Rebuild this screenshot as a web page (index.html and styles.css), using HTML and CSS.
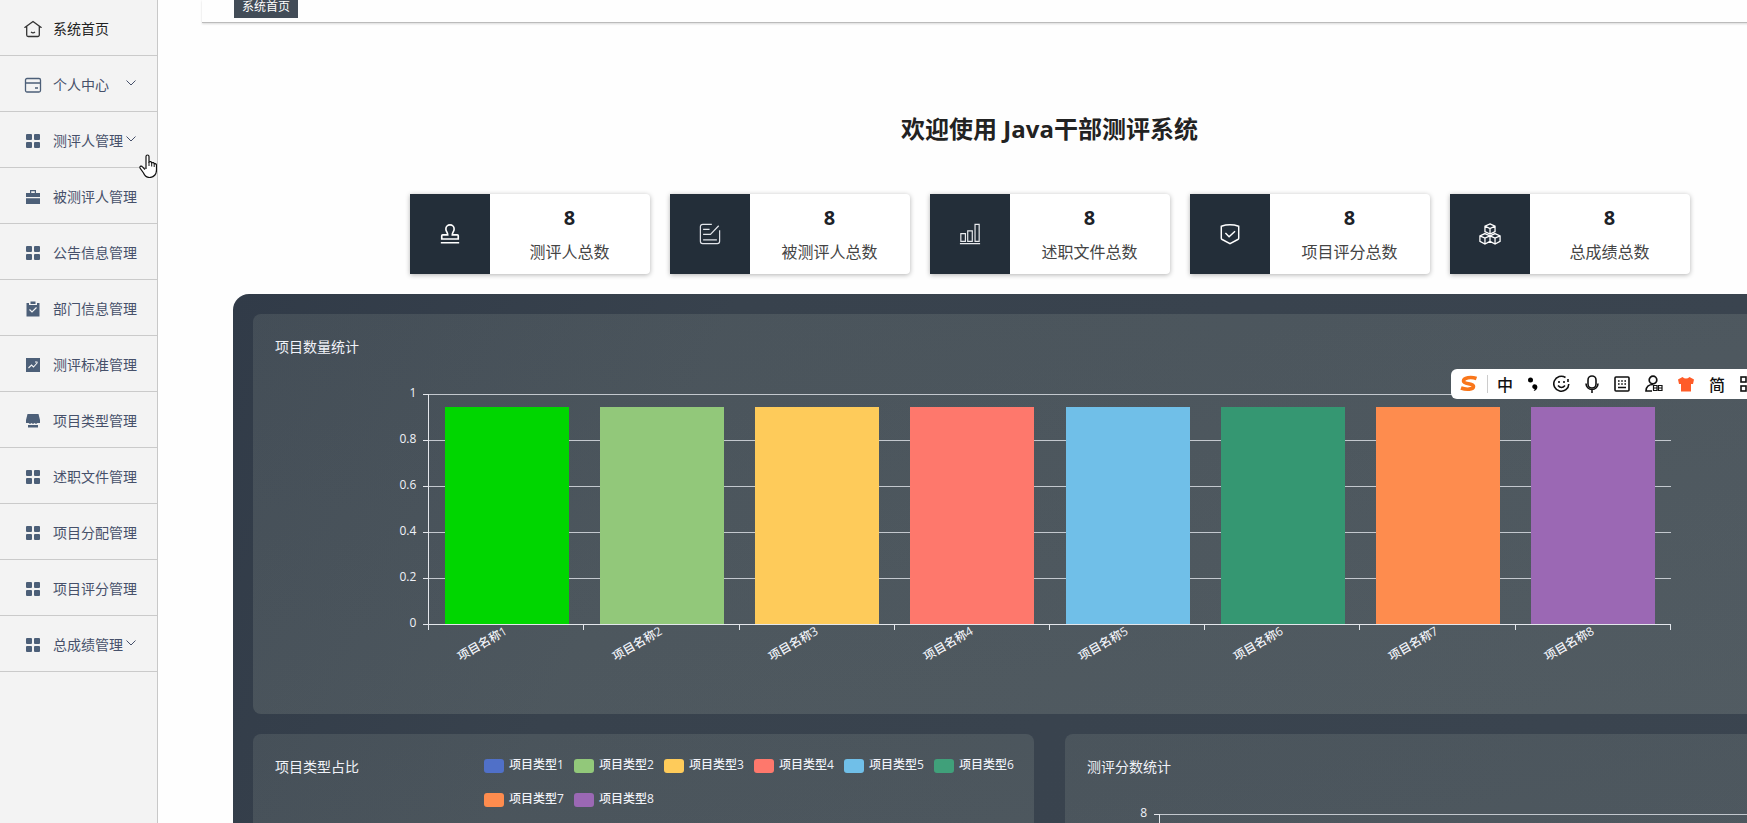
FILE: index.html
```html
<!DOCTYPE html>
<html lang="zh-CN">
<head>
  <meta charset="UTF-8" />
  <meta name="viewport" content="width=device-width, initial-scale=1.0"/>
  <title>Java干部测评系统</title>
  <link rel="stylesheet" href="styles.css">
</head>
<body>

<!-- Shared icons -->
<svg class="defs">
  <symbol id="i-grid" viewBox="0 0 18 18">
    <g fill="currentColor"><rect x="2" y="2" width="6" height="6" rx="1"/><rect x="10" y="2" width="6" height="6" rx="1"/><rect x="2" y="10" width="6" height="6" rx="1"/><rect x="10" y="10" width="6" height="6" rx="1"/></g>
  </symbol>
  <symbol id="i-down" viewBox="0 0 12 12">
    <path d="M1.500 3.500l4.500 4.500 4.500-4.500" fill="none" stroke="currentColor"/>
  </symbol>
</svg>

<div class="page">
  <!-- Sidebar -->
  <nav class="sidebar">
    <a href="#" class="item active">
      <svg class="icon" viewBox="0 0 18 18" fill="none" stroke="currentColor" stroke-width="1.3"><path d="M9 1.5l7.5 5.5h-1.2v8a1.5 1.5 0 0 1-1.500 1.500h-9.600a1.500 1.500 0 0 1-1.500-1.500v-8h-1.200z"/><path d="M7 12q2 1.600 4 0"/></svg>
      <span>系统首页</span>
    </a>
    <button type="button" class="item">
      <svg class="icon" viewBox="0 0 18 18" fill="none" stroke="currentColor" stroke-width="1.3"><rect x="1.500" y="2.500" width="15" height="13.500" rx="1.500"/><path d="M1.500 7h15M11 12h3"/></svg>
      <span>个人中心</span>
      <svg class="arrow"><use href="#i-down"/></svg>
    </button>
    <button type="button" class="item">
      <svg class="icon"><use href="#i-grid"/></svg>
      <span>测评人管理</span>
      <svg class="arrow"><use href="#i-down"/></svg>
    </button>
    <a href="#" class="item">
      <svg class="icon" viewBox="0 0 18 18" fill="currentColor"><path d="M6 5V2h6v3h4v4H2V5zM7.200 3.200V5h3.600V3.200zM2 10.200h14V16H2z" fill-rule="evenodd"/></svg>
      <span>被测评人管理</span>
    </a>
    <a href="#" class="item"><svg class="icon"><use href="#i-grid"/></svg><span>公告信息管理</span></a>
    <a href="#" class="item">
      <svg class="icon" viewBox="0 0 18 18" fill="currentColor"><path d="M2.500 3H5v2h8V3h2.500v13.500h-13zM6.500 1.500h5V4h-5z"/><path d="M5.500 9.500l2.500 2.500 4.500-4.500" fill="none" stroke="#f3f3f3" stroke-width="1.200"/></svg>
      <span>部门信息管理</span>
    </a>
    <a href="#" class="item">
      <svg class="icon" viewBox="0 0 18 18" fill="currentColor"><path d="M2 2h14v14H2z"/><path d="M4.500 12l3-3 2 2 4-4.500M11 6h2.500" fill="none" stroke="#f3f3f3" stroke-width="1.100"/></svg>
      <span>测评标准管理</span>
    </a>
    <a href="#" class="item">
      <svg class="icon" viewBox="0 0 18 18" fill="currentColor"><path d="M3.500 2h11L16 8v3h-2.500l-1.500 1-1.500-1-1.500 1-1.500-1-1.500 1-1.500-1H2V8zM4 13h10v2.500H4z"/></svg>
      <span>项目类型管理</span>
    </a>
    <a href="#" class="item"><svg class="icon"><use href="#i-grid"/></svg><span>述职文件管理</span></a>
    <a href="#" class="item"><svg class="icon"><use href="#i-grid"/></svg><span>项目分配管理</span></a>
    <a href="#" class="item"><svg class="icon"><use href="#i-grid"/></svg><span>项目评分管理</span></a>
    <button type="button" class="item">
      <svg class="icon"><use href="#i-grid"/></svg>
      <span>总成绩管理</span>
      <svg class="arrow"><use href="#i-down"/></svg>
    </button>
  </nav>

  <main class="main">
    <div class="tabs"><a href="#" class="tab">系统首页</a></div>

    <h1>欢迎使用 Java干部测评系统</h1>

    <!-- Totals -->
    <div class="cards">
      <div class="card">
        <div class="card-icon"><svg viewBox="0 0 24 24" fill="none" stroke="#fff" stroke-width="1.800"><path d="M9.500 13c0-3-2-3.500-2-6.500a4.500 4.500 0 0 1 9 0c0 3-2 3.500-2 6.500H20a1 1 0 0 1 1 1v3.500H3V14a1 1 0 0 1 1-1zM2 21.500h20"/></svg></div>
        <div class="card-text"><strong>8</strong><span>测评人总数</span></div>
      </div>
      <div class="card">
        <div class="card-icon"><svg viewBox="0 0 24 24" fill="none" stroke="#e2e5ea" stroke-width="1.300"><path d="M14 1.500H4A2.500 2.500 0 0 0 1.500 4v16A2.500 2.500 0 0 0 4 22.500h16a2.500 2.500 0 0 0 2.500-2.500V8M4.500 7h7M4.500 12.500h8L21.500 3M4.500 18.500h15"/></svg></div>
        <div class="card-text"><strong>8</strong><span>被测评人总数</span></div>
      </div>
      <div class="card">
        <div class="card-icon"><svg viewBox="0 0 24 24" fill="none" stroke="#e8eaed" stroke-width="1.300"><path d="M2 11.500h5v8.500H2zM9.500 8.500h5V20h-5zM17.500 1.500H22V20h-4.500zM1 22.500h22"/></svg></div>
        <div class="card-text"><strong>8</strong><span>述职文件总数</span></div>
      </div>
      <div class="card">
        <div class="card-icon"><svg viewBox="0 0 24 24" fill="none" stroke="#fff" stroke-width="1.600"><path d="M2.500 3.500q9.500-3 19 0v13q0 1-1 1.500l-8.500 4.500L3.500 18q-1-.5-1-1.500zM7 11l4 4 6.500-6"/></svg></div>
        <div class="card-text"><strong>8</strong><span>项目评分总数</span></div>
      </div>
      <div class="card">
        <div class="card-icon"><svg viewBox="0 0 24 24" fill="none" stroke="#fff" stroke-width="1.400"><path d="M12 1l5.500 2.500v6L12 12 6.500 9.500v-6zM6.500 3.500L12 6l5.500-2.500M12 6v6M6.500 11.500L12 14v6l-5.500 3L1 20v-6zM1 14l5.500 2.500L12 14M6.500 16.500V23M17.500 11.500L23 14v6l-5.500 3-5.500-3v-6zM12 14l5.500 2.500L23 14M17.500 16.500V23"/></svg></div>
        <div class="card-text"><strong>8</strong><span>总成绩总数</span></div>
      </div>
    </div>

    <!-- Charts -->
    <div class="dashboard">
      <section class="panel wide">
        <h2>项目数量统计</h2>
        <div class="chart">
          <div class="y-axis"><span>1</span><span>0.8</span><span>0.6</span><span>0.4</span><span>0.2</span><span>0</span></div>
          <div class="plot">
            <div class="slot"><div class="bar green"></div></div>
            <div class="slot"><div class="bar c2"></div></div>
            <div class="slot"><div class="bar c3"></div></div>
            <div class="slot"><div class="bar c4"></div></div>
            <div class="slot"><div class="bar c5"></div></div>
            <div class="slot"><div class="bar c6"></div></div>
            <div class="slot"><div class="bar c7"></div></div>
            <div class="slot"><div class="bar c8"></div></div>
          </div>
          <div class="x-axis">
            <div class="tick"><span>项目名称1</span></div>
            <div class="tick"><span>项目名称2</span></div>
            <div class="tick"><span>项目名称3</span></div>
            <div class="tick"><span>项目名称4</span></div>
            <div class="tick"><span>项目名称5</span></div>
            <div class="tick"><span>项目名称6</span></div>
            <div class="tick"><span>项目名称7</span></div>
            <div class="tick"><span>项目名称8</span></div>
          </div>
        </div>
      </section>

      <section class="panel pie">
        <h2>项目类型占比</h2>
        <ul class="legend">
          <li><i class="c1"></i>项目类型1</li>
          <li><i class="c2"></i>项目类型2</li>
          <li><i class="c3"></i>项目类型3</li>
          <li><i class="c4"></i>项目类型4</li>
          <li><i class="c5"></i>项目类型5</li>
          <li><i class="c6"></i>项目类型6</li>
          <li><i class="c7"></i>项目类型7</li>
          <li><i class="c8"></i>项目类型8</li>
        </ul>
      </section>

      <section class="panel">
        <h2>测评分数统计</h2>
        <div class="chart">
          <div class="y-axis"><span>8</span></div>
          <div class="plot"></div>
        </div>
      </section>
    </div>
  </main>
</div>

<!-- Input method bar -->
<div class="ime">
  <svg width="18" height="18" viewBox="0 0 18 18"><path d="M16.500 3.500C11 1.500 3.500 2.500 3.500 6c0 3.500 10.500 2 10 5.500-.3 3-7 3.500-12.500 1.500" fill="none" stroke="#f9761a" stroke-width="3.600"/></svg>
  <i class="sep"></i>
  <span>中</span>
  <svg width="10" height="18" viewBox="0 0 10 18"><circle cx="2.500" cy="5" r="2.500"/><path d="M7.500 9.500a2.300 2.300 0 1 0-.8 4.400l-1 2c4-.5 5-5.600 1.800-6.400z"/></svg>
  <svg width="17" height="18" viewBox="0 0 17 18" fill="none" stroke="#111" stroke-width="1.600"><path d="M12.500 2.500A7.500 7.500 0 1 0 15.800 9M5 10.500q3.500 4 7 0"/><path d="M6 6v2M11 6v2M15 4v3"/></svg>
  <svg width="14" height="18" viewBox="0 0 14 18" fill="none" stroke="#111" stroke-width="1.600"><rect x="3" y="1" width="8" height="12" rx="4"/><path d="M1 8.500a6 6 0 0 0 12 0M7 14.500V18"/></svg>
  <svg width="16" height="18" viewBox="0 0 16 18" fill="none" stroke="#111" stroke-width="1.600"><rect x="1" y="2" width="14" height="14" rx="1"/><path d="M4 6h8M4 9h8" stroke-dasharray="1.600 1.600"/><path d="M4 12.500h8"/></svg>
  <svg width="18" height="18" viewBox="0 0 18 18" fill="none" stroke="#111" stroke-width="1.700"><circle cx="8" cy="5" r="3.800"/><path d="M7 16H1c0-4 3-6.500 7-6.500"/><path d="M8.500 10.500h3.500v5h-3.500zM13.500 10.500H17v5h-3.500zM8.500 13H12M13.500 13H17" stroke-width="1.200"/></svg>
  <svg width="16" height="18" viewBox="0 0 16 18"><path d="M4.500 2q3.500 3 7 0L16 4.500 15 9h-2v7.500H3V9H1L0 4.500z" fill="#ff5c28"/></svg>
  <span>简</span>
  <svg width="18" height="18" viewBox="0 0 18 18" fill="none" stroke="#111" stroke-width="1.600"><rect x="1" y="2" width="5" height="5"/><rect x="1" y="11" width="5" height="5"/><rect x="10" y="2" width="5" height="5"/><rect x="10" y="11" width="5" height="5"/></svg>
</div>

<!-- Hand pointer -->
<svg class="pointer" viewBox="0 0 18 24"><path d="M7 15V2.500a1.500 1.500 0 0 1 3 0V8q2-1 2.700.8 2-.8 2.500.9 2-.3 2.300 1.300v5c0 4-2.500 7.500-7 7.500-3.500 0-5-2-6-4.500L1 14c-.5-2 1.500-2.500 2.500-1.200L6 15.500" fill="#fff" stroke="#111" stroke-width="1.200"/><path d="M10 8v4M12.700 9v3.500M15.200 10v3" stroke="#111"/></svg>

</body>
</html>
```
FILE: styles.css
```css
* {
  box-sizing: border-box;
}

body, html {
  margin: 0;
  padding: 0;
  height: 100vh;
  overflow: hidden;
  font-family: "Open Sans", "Noto Sans CJK SC", sans-serif;
  background: #fefefe;
  color: #222;
}

.defs {
  display: none;
}

/* the content is a bit wider than the window and runs off to the right */
.page {
  display: flex;
  min-height: 100vh;
  margin-right: -150px;
}

/* sidebar */
.sidebar {
  flex: none;
  width: 158px;
  background: #f3f3f3;
  border-right: 1px solid #c8c8c8;
}

.item {
  display: flex;
  align-items: center;
  width: 100%;
  height: 56px;
  padding: 2px 20px 0 24px;
  border: none;
  border-bottom: 1px solid #cacaca;
  background: none;
  color: #46506a;
  font-family: inherit;
  font-size: 14px;
  line-height: 20px;
  text-decoration: none;
  white-space: nowrap;
  cursor: pointer;
}

.item.active {
  color: #222;
}

.icon {
  flex: none;
  width: 18px;
  height: 18px;
  margin-right: 11px;
  color: #4c5f78;
}

.active .icon {
  color: #333;
}

.arrow {
  flex: none;
  width: 12px;
  height: 12px;
  margin: 0 0 4px auto;
}

/* main */
.main {
  flex: 1;
  margin-left: 44px;
}

.tabs {
  height: 23px;
  padding-left: 32px;
  border-bottom: 1px solid #bbb;
  box-shadow: 0 1px 2px rgba(0, 0, 0, 0.15);
}

.tab {
  display: inline-block;
  height: 18px;
  padding: 0 8px;
  background: #424c57;
  color: #fff;
  font-size: 12px;
  line-height: 14px;
  text-decoration: none;
  vertical-align: top;
}

h1 {
  margin: 90px 0 49px;
  font-size: 24px;
  line-height: 32px;
  text-align: center;
}

.cards {
  display: flex;
  justify-content: center;
  gap: 20px;
}

.card {
  display: flex;
  width: 240px;
  height: 80px;
  background: #fff;
  border-radius: 0 4px 4px 0;
  box-shadow: 0 1px 5px rgba(0, 0, 0, 0.3);
}

.card-icon {
  display: flex;
  align-items: center;
  justify-content: center;
  width: 80px;
  background: #232e39;
}

.card-icon svg {
  width: 22px;
  height: 22px;
}

.card-text {
  flex: 1;
  display: flex;
  flex-direction: column;
  align-items: center;
  padding-top: 7px;
  font-size: 16px;
  line-height: 34px;
  color: #444;
}

.card-text strong {
  font-size: 20px;
  color: #1c2228;
}

/* dashboard */
.dashboard {
  display: grid;
  grid-template-columns: 1fr 1fr;
  gap: 20px 31px;
  margin: 20px 31px 0;
  padding: 20px;
  border-radius: 16px;
  background: linear-gradient(115deg, #313b48, #38424d 25%, #3b4550);
}

.panel {
  height: 400px;
  padding: 20px;
  border-radius: 8px;
  background: linear-gradient(170deg, rgba(215, 225, 205, 0.11), rgba(215, 225, 205, 0.15));
  color: #f0f2f8;
}

.panel.wide {
  grid-column: 1 / 3;
}

h2 {
  margin: 0;
  padding-left: 2px;
  font-size: 14px;
  font-weight: normal;
  line-height: 26px;
}

.chart {
  display: grid;
  grid-template-columns: 10% 80%;
  margin-top: 34px;
  font-size: 12px;
  font-weight: 500;
  line-height: 14px;
}

.y-axis {
  display: flex;
  flex-direction: column;
  justify-content: space-between;
  align-items: flex-end;
  margin: -8px 0 -6px;
  padding-right: 12px;
}

.plot {
  position: relative;
  display: flex;
  height: 230px;
  border-left: 1px solid #e4e7ec;
  background: repeating-linear-gradient(to bottom, #c3c8ce 0 1px, transparent 1px 46px);
}

/* small marks left of the y axis */
.plot::before {
  content: "";
  position: absolute;
  left: -6px;
  width: 5px;
  height: 231px;
  background: repeating-linear-gradient(to bottom, #e4e7ec 0 1px, transparent 1px 46px);
}

.slot {
  flex: 1;
  display: flex;
  align-items: flex-end;
  justify-content: center;
}

.bar {
  width: 80%;
  height: 217px;
}

.x-axis {
  grid-column: 2;
  display: flex;
  border-top: 1px solid #e4e7ec;
}

.tick {
  flex: 1;
  height: 5px;
  border-left: 1px solid #e4e7ec;
}

.tick:last-child {
  border-right: 1px solid #e4e7ec;
}

.tick span {
  display: block;
  width: 50%;
  line-height: 10px;
  text-align: right;
  transform: rotate(-30deg);
  transform-origin: right center;
}

.pie {
  display: flex;
  justify-content: space-between;
  align-items: flex-start;
}

.legend {
  display: flex;
  flex-wrap: wrap;
  gap: 19px 10px;
  width: 530px;
  margin: 4px 0 0;
  padding: 0;
  list-style: none;
  font-size: 12px;
  font-weight: 500;
  line-height: 14px;
}

.legend li {
  display: flex;
  gap: 5px;
  width: 80px;
  white-space: nowrap;
}

.legend i {
  flex: none;
  width: 20px;
  height: 14px;
  margin-top: 1px;
  border-radius: 3px;
}

.green { background: #00d600; }
.c1 { background: #5070c8; }
.c2 { background: #92c87a; }
.c3 { background: #fecb5a; }
.c4 { background: #fe786c; }
.c5 { background: #70bfe8; }
.c6 { background: #359772; }
.c7 { background: #fe8c4e; }
.c8 { background: #9b68b4; }

.legend .c6 { background: #40a07a; }

/* floating input bar */
.ime {
  position: fixed;
  top: 369px;
  right: 0;
  display: flex;
  align-items: center;
  gap: 15px;
  width: 296px;
  height: 30px;
  padding-left: 9px;
  overflow: hidden;
  border-radius: 6px 0 0 6px;
  background: #fff;
  color: #111;
  font-size: 16px;
  font-weight: 500;
}

.ime svg {
  flex: none;
}

.ime .sep {
  flex: none;
  width: 1px;
  height: 18px;
  margin: 0 -6px;
  background: #ccc;
}

.pointer {
  position: fixed;
  top: 154px;
  left: 139px;
  width: 18px;
  height: 24px;
}
```
